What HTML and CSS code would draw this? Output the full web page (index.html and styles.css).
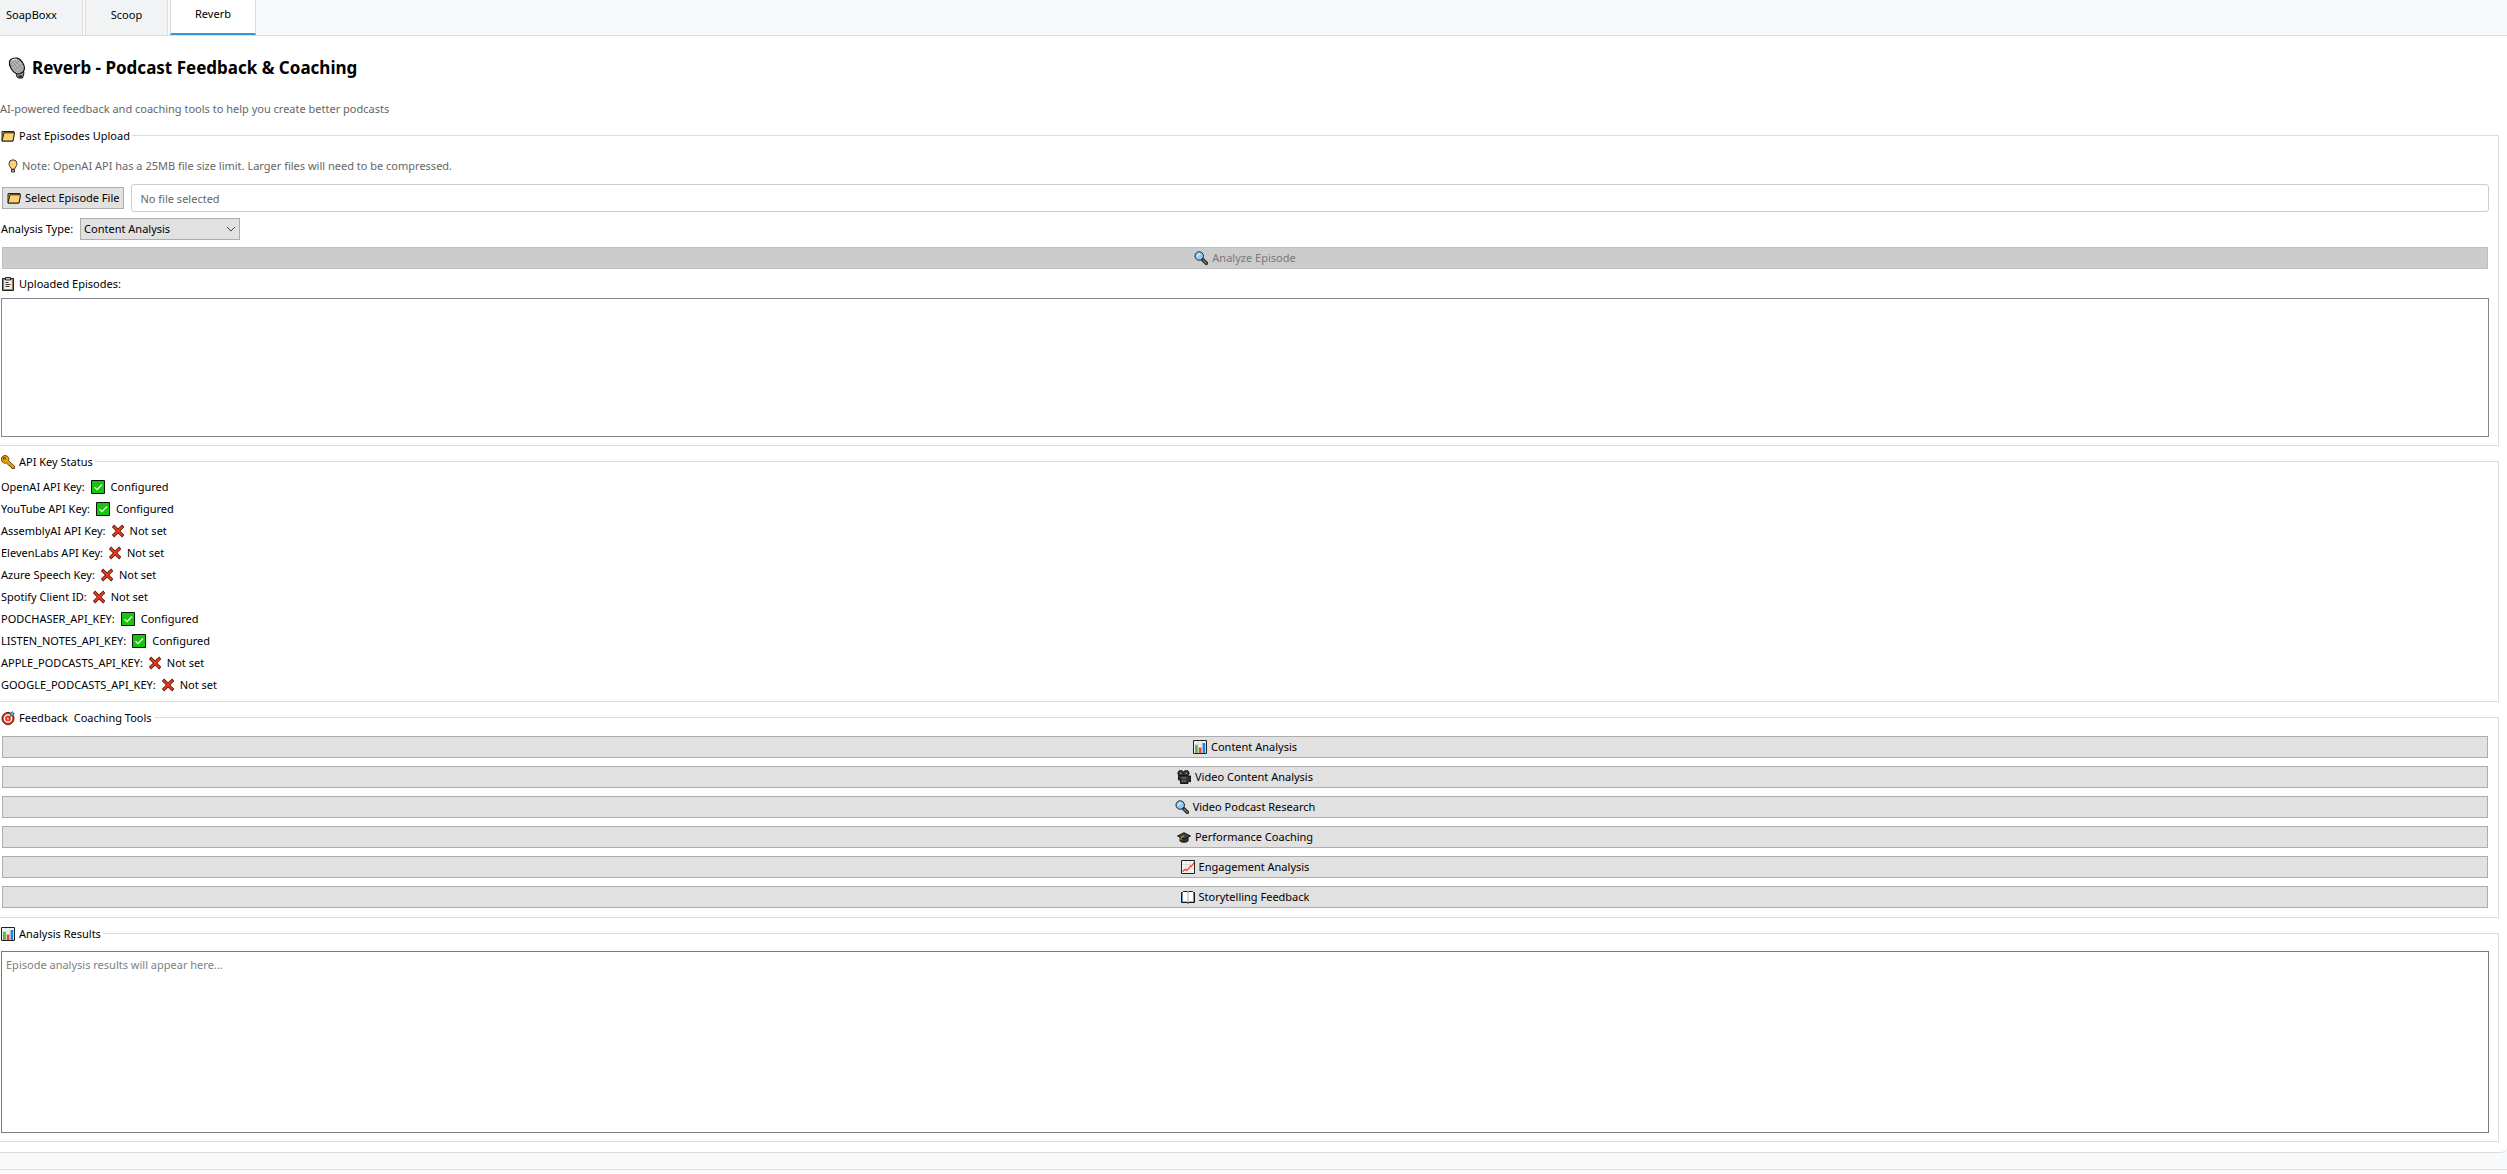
FILE: index.html
```html
<!DOCTYPE html>
<html lang="en">
<head>
    <meta charset="UTF-8">
    <meta name="viewport" content="width=device-width, initial-scale=1.0">
    <title>SoapBoxx - Reverb</title>
    <link rel="stylesheet" href="styles.css">
</head>
<body>
    <svg class="sprite" aria-hidden="true">
        <symbol id="folder" viewBox="0 0 14 14">
            <path d="M1 12V2.5h12v3L12 12z" fill="#e0ab3c" stroke="#222" />
            <path d="M1 12L3 3.800h10.500L12 12z" fill="#ffd071" stroke="#222" stroke-linejoin="round" />
        </symbol>
        <symbol id="bulb" viewBox="0 0 10 14">
            <path d="M3.5 10.2C3.3 8.5 1 7.6 1 4.8a4 4 0 0 1 8 0c0 2.8-2.3 3.7-2.5 5.4z" fill="#ffd36b" stroke="#3a3a3a" />
            <path d="M3.5 10.5h3V13h-3z" fill="#aaa" stroke="#333" />
        </symbol>
        <symbol id="search" viewBox="0 0 14 14">
            <path d="M8 8l4.300 4.300" stroke="#222" stroke-width="3.600" stroke-linecap="round" />
            <path d="M9 9l3.200 3.200" stroke="#777" stroke-width="1.400" stroke-linecap="round" />
            <circle cx="5.200" cy="5" r="4.200" fill="#8ecbf7" stroke="#222" />
            <path d="M2.800 5.500L6 2.300" stroke="#d5edff" stroke-width="1.500" />
        </symbol>
        <symbol id="clipboard" viewBox="0 0 14 14">
            <path d="M1.5 1.5h11v12h-11z" fill="#a97c57" stroke="#222" />
            <path d="M3.2 3h7.6v9H3.2z" fill="#f4f4f4" />
            <path d="M4.5.5h5V3h-5z" fill="#ccc" stroke="#222" />
            <path d="M4.5 5.5h3M4.5 7.5h5M4.5 9.5h4" stroke="#333" />
        </symbol>
        <symbol id="key" viewBox="0 0 14 14">
            <path fill-rule="evenodd" d="M1.2 1.8C3 0 5.5.2 6.8 1.6 8 2.8 8 4.4 7.5 5.6l6 5.6v2.3h-2.6l-.5-1.5-1.3-.2-.2-1.4-1.3-.2L5.4 8C4 8.4 2.500 8.200 1.400 7 .2 5.600 0 3.400 1.200 1.800zM2.500 2.600v1.600h1.800V2.600z" fill="#e9a100" stroke="#3b2a05" stroke-width=".8" />
        </symbol>
        <symbol id="check" viewBox="0 0 14 14">
            <path d="M.5.5h13v13H.5z" fill="#16c60c" stroke="#111" />
            <path d="M3.5 7.2L6 9.7l5-5.2" fill="none" stroke="#fff" stroke-width="1.2" />
        </symbol>
        <symbol id="cross" viewBox="0 0 12 14">
            <path d="M2.2 3C5 5.500 7 8.500 10 11M10 3C7 5.500 5 8.500 2.200 11" stroke="#4a150e" stroke-width="3.400" stroke-linecap="square" fill="none" />
            <path d="M2.200 3C5 5.500 7 8.500 10 11M10 3C7 5.500 5 8.500 2.200 11" stroke="#f03a17" stroke-width="1.900" stroke-linecap="square" fill="none" />
        </symbol>
        <symbol id="target" viewBox="0 0 14 14">
            <circle cx="7" cy="7.500" r="6" fill="#f03a17" stroke="#3a1510" />
            <circle cx="7" cy="7.500" r="3.600" fill="none" stroke="#fff" stroke-width="1.400" />
            <circle cx="7" cy="7.500" r="1.100" fill="#fff" />
            <path d="M7 7.500l2.500-2.700.1-2.300 1.900-2 .5 1.600 1.500.5-2 2-2 .2z" fill="#3cc0f0" stroke="#155a80" stroke-width=".7" />
        </symbol>
        <symbol id="bars" viewBox="0 0 14 14">
            <path d="M.5.5h13v13H.5z" fill="#f2f2f2" stroke="#222" />
            <path d="M1 4.500h12M1 8.500h12M5 1v12M9 1v12" stroke="#d0d0d0" stroke-width=".6" />
            <path d="M2 5h2.800v8H2z" fill="#3dc93b" />
            <path d="M5.800 7.500h2.600V13H5.800z" fill="#f0432a" />
            <path d="M9.600 3h2.600v10H9.600z" fill="#1b85e8" />
        </symbol>
        <symbol id="camera" viewBox="0 0 14 14">
            <circle cx="3.700" cy="3.300" r="2.800" fill="#3a3a3a" stroke="#151515" />
            <circle cx="9.300" cy="3.300" r="2.800" fill="#3a3a3a" stroke="#151515" />
            <path d="M1.500 5.500H11v1.300l2.500-1v6l-2.500-1v2.700H3.500V10h-2z" fill="#303030" stroke="#151515" />
            <path d="M4.500 8h5M4.500 11h5" stroke="#999" stroke-width=".8" />
            <circle cx="3.700" cy="3.300" r=".8" fill="#999" />
            <circle cx="9.300" cy="3.300" r=".8" fill="#999" />
        </symbol>
        <symbol id="cap" viewBox="0 0 14 14">
            <path d="M3 6.500V11c2 1.700 6 1.700 8 0V6.500z" fill="#333" stroke="#151515" />
            <path d="M.5 6L7 2.700 13.500 6 7 9.300z" fill="#444" stroke="#151515" />
            <path d="M7 6L4 7.300V10" fill="none" stroke="#e0a020" />
        </symbol>
        <symbol id="trend" viewBox="0 0 14 14">
            <path d="M.5.5h13v13H.5z" fill="#f4f4f4" stroke="#222" />
            <path d="M1 4.500h12M1 8.500h12M5 1v12M9 1v12" stroke="#ccc" stroke-width=".6" />
            <path d="M1.500 11.500L4 9.500l2 1L9.500 6l1 .5L13 2.500" fill="none" stroke="#f03a17" stroke-width="1.200" />
        </symbol>
        <symbol id="book" viewBox="0 0 14 14">
            <path d="M.5 2.500H2l.5-1h3.700l.8 1 .8-1h3.700l.5 1h1.500v10H8l-1 .8-1-.8H.5z" fill="#3f7fae" stroke="#151515" />
            <path d="M1.800 2h4.400l.8 1 .8-1h4.400v9.500H8l-1 .8-1-.8H1.800z" fill="#fff" />
            <path d="M7 3v9" stroke="#888" stroke-width=".7" />
        </symbol>
        <symbol id="mic" viewBox="0 0 18 22">
            <path d="M9 15.500l5.500-2.500 1.500 3-1.500 5H10l-1.500-2z" fill="#999" stroke="#111" />
            <path d="M10.500 18.500h3.500v2h-3.500z" fill="#222" />
            <path d="M1.500 4C3 1.800 6.500.7 9 1.200c4 .8 7.500 6.300 7.500 10.300l-1 3-4 2.500-3.500-.5C4.500 15 .5 9 1.500 4z" fill="#b5b5b5" stroke="#111" stroke-width="1.200" />
            <path d="M3.500 4.500l9.500 10M6.500 3l8 8.500M3 8l7 7.500M3 6.500L8 2.500M4.500 9.500l7.500-6M7 12.500l7.500-6M10 15l5-4" stroke="#808080" stroke-width=".6" />
            <path d="M3.500 3.500C5 2.300 7 2 9 2.400" stroke="#eee" fill="none" />
        </symbol>
    </svg>

    <nav class="tabs" role="tablist">
        <button class="tab first" role="tab" type="button">SoapBoxx</button>
        <button class="tab" role="tab" type="button">Scoop</button>
        <button class="tab active" role="tab" type="button" aria-selected="true">Reverb</button>
    </nav>

    <main class="pane">
        <h1 class="title"><svg class="mic"><use href="#mic" /></svg>Reverb - Podcast Feedback &amp; Coaching</h1>
        <p class="subtitle">AI-powered feedback and coaching tools to help you create better podcasts</p>

        <fieldset class="group">
            <legend><svg class="icon"><use href="#folder" /></svg>Past Episodes Upload</legend>
            <div class="stack">
                <p class="note"><svg class="icon bulb"><use href="#bulb" /></svg>Note: OpenAI API has a 25MB file size limit. Larger files will need to be compressed.</p>
                <div class="row">
                    <button class="btn" type="button"><svg class="icon"><use href="#folder" /></svg>Select Episode File</button>
                    <input class="file-name" type="text" value="No file selected" aria-label="Selected file" readonly>
                </div>
                <div class="row">
                    <label for="analysisType">Analysis Type:</label>
                    <div class="select-wrap">
                        <select id="analysisType">
                            <option>Content Analysis</option>
                            <option>Performance Coaching</option>
                            <option>Engagement Analysis</option>
                            <option>Storytelling Feedback</option>
                        </select>
                        <svg class="arrow" viewBox="0 0 10 6"><path d="M1 1l4 4 4-4" fill="none" stroke="#444" /></svg>
                    </div>
                </div>
                <button class="btn" type="button" disabled><svg class="icon"><use href="#search" /></svg>Analyze Episode</button>
                <p class="label" id="episodesLabel"><svg class="icon"><use href="#clipboard" /></svg>Uploaded Episodes:</p>
                <ul class="episodes" aria-labelledby="episodesLabel"></ul>
            </div>
        </fieldset>

        <fieldset class="group">
            <legend><svg class="icon"><use href="#key" /></svg>API Key Status</legend>
            <ul class="stack keys">
                <li>OpenAI API Key: <svg class="icon"><use href="#check" /></svg> Configured</li>
                <li>YouTube API Key: <svg class="icon"><use href="#check" /></svg> Configured</li>
                <li>AssemblyAI API Key: <svg class="icon cross"><use href="#cross" /></svg> Not set</li>
                <li>ElevenLabs API Key: <svg class="icon cross"><use href="#cross" /></svg> Not set</li>
                <li>Azure Speech Key: <svg class="icon cross"><use href="#cross" /></svg> Not set</li>
                <li>Spotify Client ID: <svg class="icon cross"><use href="#cross" /></svg> Not set</li>
                <li>PODCHASER_API_KEY: <svg class="icon"><use href="#check" /></svg> Configured</li>
                <li>LISTEN_NOTES_API_KEY: <svg class="icon"><use href="#check" /></svg> Configured</li>
                <li>APPLE_PODCASTS_API_KEY: <svg class="icon cross"><use href="#cross" /></svg> Not set</li>
                <li>GOOGLE_PODCASTS_API_KEY: <svg class="icon cross"><use href="#cross" /></svg> Not set</li>
            </ul>
        </fieldset>

        <fieldset class="group">
            <legend><svg class="icon"><use href="#target" /></svg>Feedback &nbsp;Coaching Tools</legend>
            <div class="stack">
                <button class="btn" type="button"><svg class="icon"><use href="#bars" /></svg>Content Analysis</button>
                <button class="btn" type="button"><svg class="icon"><use href="#camera" /></svg>Video Content Analysis</button>
                <button class="btn" type="button"><svg class="icon"><use href="#search" /></svg>Video Podcast Research</button>
                <button class="btn" type="button"><svg class="icon"><use href="#cap" /></svg>Performance Coaching</button>
                <button class="btn" type="button"><svg class="icon"><use href="#trend" /></svg>Engagement Analysis</button>
                <button class="btn" type="button"><svg class="icon"><use href="#book" /></svg>Storytelling Feedback</button>
            </div>
        </fieldset>

        <fieldset class="group">
            <legend><svg class="icon"><use href="#bars" /></svg>Analysis Results</legend>
            <div class="stack">
                <textarea class="results" placeholder="Episode analysis results will appear here..." aria-label="Analysis results"></textarea>
            </div>
        </fieldset>
    </main>
    <footer class="status-bar"></footer>
</body>
</html>
```

FILE: styles.css
```css
* {
    box-sizing: border-box;
}
body {
    margin: 0;
    min-height: 100vh;
    display: flex;
    flex-direction: column;
    background-color: #f8f9fa;
    color: #000;
    font-family: "Noto Sans", "Open Sans", sans-serif;
    font-size: 11px;
    line-height: 16px;
}
button, input, select, textarea {
    font: inherit;
    color: inherit;
}
h1, p, ul {
    margin: 0;
    padding: 0;
}
.sprite {
    display: none;
}
.icon {
    width: 14px;
    height: 14px;
    flex: none;
}

/* tabs */
.tabs {
    display: flex;
    gap: 2px;
    height: 35px;
}
.tab {
    width: 83px;
    padding: 0 0 6px;
    border: 1px solid #ddd;
    border-width: 0 1px;
    background-color: #f1f3f4;
}
.tab.first {
    padding-left: 6px;
    border-left: none;
    text-align: left;
}
.tab.active {
    width: 86px;
    border-bottom: 2px solid #3498db;
    background-color: #fff;
}

.pane {
    padding: 20px 8px 10px 0;
    border-top: 1px solid #ddd;
    border-bottom: 1px solid #ddd;
    border-bottom-right-radius: 6px;
    background-color: #fff;
}
.title {
    display: flex;
    align-items: center;
    gap: 6px;
    padding-left: 8px;
    font-size: 17px;
    line-height: 24px;
}
.mic {
    width: 18px;
    height: 22px;
}
.subtitle {
    margin: 21px 0 10px;
    color: #666;
}

/* group boxes */
.group {
    min-width: 0;
    margin: 0;
    padding: 9px 9px 8px 1px;
    border: 1px solid #dcdcdc;
    border-left: none;
}
.group + .group {
    margin-top: 7px;
}
.group legend {
    display: flex;
    align-items: center;
    gap: 4px;
    height: 17px;
    margin-left: -1px;
    padding: 0 2px 0 1px;
}
.stack {
    display: flex;
    flex-direction: column;
    gap: 6px;
}
.row {
    display: flex;
    align-items: center;
    gap: 6px;
}
.note {
    display: flex;
    align-items: center;
    gap: 4px;
    height: 25px;
    padding-left: 7px;
    color: #666;
}
.bulb {
    width: 10px;
}
.btn {
    display: flex;
    align-items: center;
    justify-content: center;
    gap: 4px;
    height: 22px;
    margin: 1px;
    padding: 0 4px;
    border: 1px solid #adadad;
    background-color: #e1e1e1;
}
.btn:disabled {
    border-color: #bfbfbf;
    background-color: #ccc;
    color: #787878;
}
.file-name {
    flex: 1;
    height: 28px;
    padding: 0 8px;
    border: 1px solid #ccc;
    border-radius: 3px;
    color: #666;
}
.select-wrap {
    position: relative;
    width: 160px;
    margin-left: 1px;
}
.select-wrap select {
    display: block;
    width: 100%;
    height: 22px;
    padding: 0 3px;
    border: 1px solid #adadad;
    border-radius: 0;
    background-color: #e1e1e1;
    appearance: none;
}
.arrow {
    position: absolute;
    top: 8px;
    right: 4px;
    width: 10px;
    height: 6px;
    pointer-events: none;
}
.label {
    display: flex;
    align-items: center;
    gap: 4px;
}
.episodes {
    height: 139px;
    border: 1px solid #828790;
    list-style: none;
}
.keys li {
    display: flex;
    align-items: center;
    gap: 6px;
    height: 16px;
}
.cross {
    width: 12px;
}
.results {
    display: block;
    width: 100%;
    height: 182px;
    padding: 5px 4px;
    border: 1px solid #7a7a7a;
    resize: none;
}
.results::placeholder {
    color: #808080;
}
.status-bar {
    flex: 1;
    margin-top: 16px;
    border-top: 1px solid #ddd;
    background-color: #fafafa;
}
```
